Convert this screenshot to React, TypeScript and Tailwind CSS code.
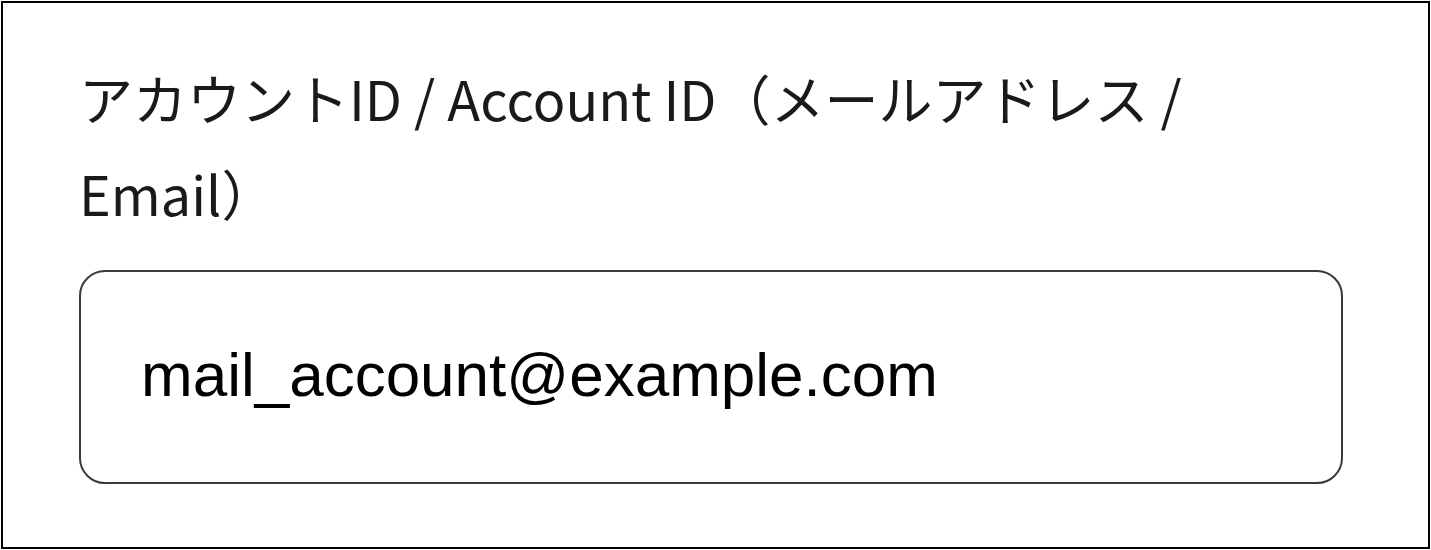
export default function App() {
  return (
    <div className="w-[1431px] h-[550px] bg-white p-px">
      <div className="h-full w-full border-2 border-black pl-[76px] pr-[85px] pt-[47px]">
        <label
          htmlFor="account-id"
          className="block text-[54px] leading-[95px] text-[#1a1a1a] font-['Noto_Sans_CJK_JP','Noto_Sans',sans-serif] pr-[140px]"
        >
          アカウントID / Account ID（メールアドレス / Email）
        </label>
        <div className="mt-[30px] h-[214px] rounded-[26px] border-2 border-[#3a3a3a] flex items-center pl-[60px] pb-[6px]">
          <span
            id="account-id"
            className="text-[62px] text-black font-['Liberation_Sans',Arial,sans-serif]"
          >
            mail_account@example.com
          </span>
        </div>
      </div>
    </div>
  );
}
